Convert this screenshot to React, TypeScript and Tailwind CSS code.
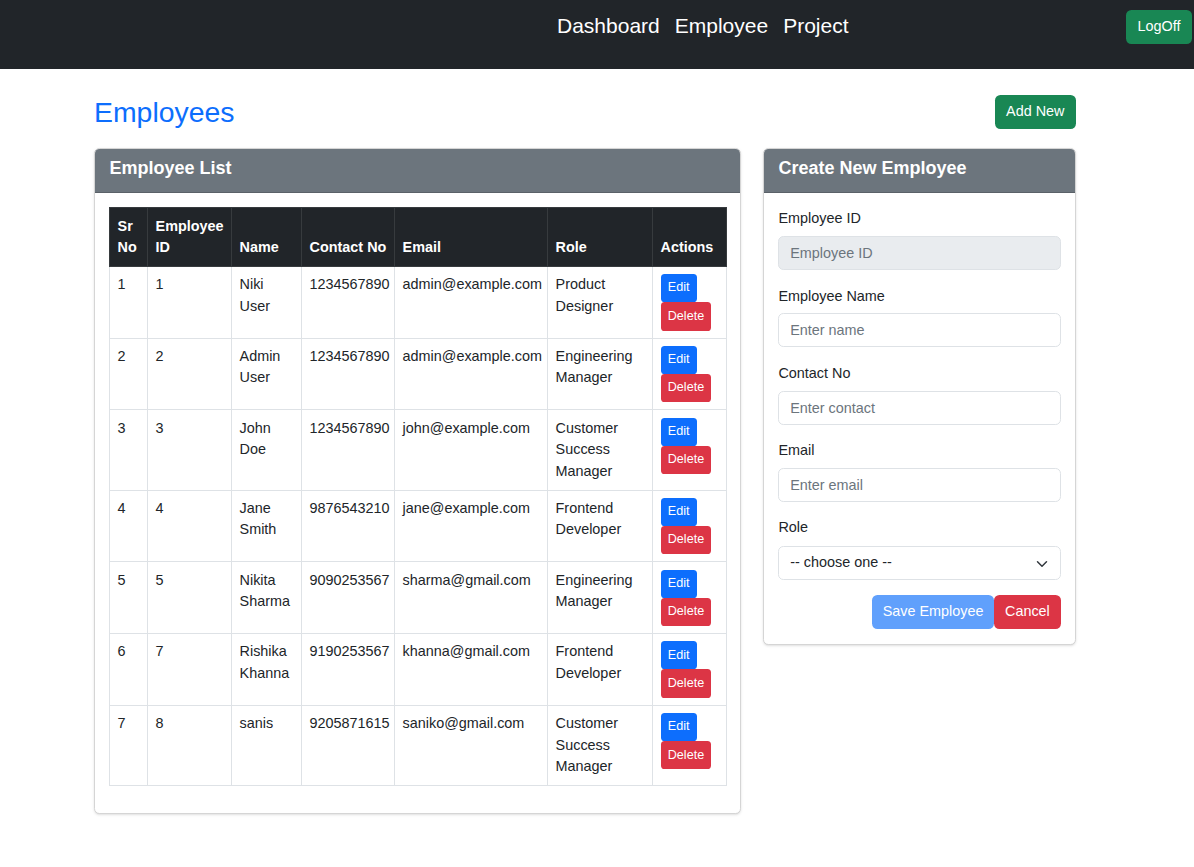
import React from 'react';

type Employee = { sr: number; id: number; name: string; contact: string; email: string; role: string };

const employees: Employee[] = [
  { sr: 1, id: 1, name: 'Niki User', contact: '1234567890', email: 'admin@example.com', role: 'Product Designer' },
  { sr: 2, id: 2, name: 'Admin User', contact: '1234567890', email: 'admin@example.com', role: 'Engineering Manager' },
  { sr: 3, id: 3, name: 'John Doe', contact: '1234567890', email: 'john@example.com', role: 'Customer Success Manager' },
  { sr: 4, id: 4, name: 'Jane Smith', contact: '9876543210', email: 'jane@example.com', role: 'Frontend Developer' },
  { sr: 5, id: 5, name: 'Nikita Sharma', contact: '9090253567', email: 'sharma@gmail.com', role: 'Engineering Manager' },
  { sr: 6, id: 7, name: 'Rishika Khanna', contact: '9190253567', email: 'khanna@gmail.com', role: 'Frontend Developer' },
  { sr: 7, id: 8, name: 'sanis', contact: '9205871615', email: 'saniko@gmail.com', role: 'Customer Success Manager' },
];

const colWidths = ['w-[38px]', 'w-[84px]', 'w-[70px]', 'w-[93px]', 'w-[153px]', 'w-[105px]', 'w-[74px]'];
const headers = [['Sr', 'No'], ['Employee', 'ID'], ['Name'], ['Contact No'], ['Email'], ['Role'], ['Actions']];

const Navbar: React.FC = () => (
  <nav className="h-[69px] bg-[#212529] flex items-start pt-[10px]">
    <div className="ml-[557px] flex gap-[15px] text-[21px] leading-[32px] text-white">
      <a className="cursor-pointer">Dashboard</a>
      <a className="cursor-pointer">Employee</a>
      <a className="cursor-pointer">Project</a>
    </div>
    <button className="ml-auto mr-[2px] h-[34px] px-[11.5px] rounded-[5.4px] bg-[#198754] text-white text-[14.4px]">
      LogOff
    </button>
  </nav>
);

const EmployeeTable: React.FC = () => (
  <div className="w-[647px] rounded-[5.4px] border border-[#d5d5d5] shadow-sm bg-white overflow-hidden">
    <div className="h-[44px] bg-[#6c757d] border-b border-[#5a6168] px-[14.4px] pb-[5px] flex items-center">
      <h5 className="text-white text-[18px] font-semibold">Employee List</h5>
    </div>
    <div className="px-[14.4px] pt-[14.4px] pb-[27px]">
      <table className="table-fixed border-collapse w-[617px] text-[14.4px] leading-[21.6px] text-[#212529]">
        <colgroup>
          {colWidths.map((w, i) => (
            <col key={i} className={w} />
          ))}
        </colgroup>
        <thead>
          <tr className="bg-[#212529] text-white">
            {headers.map((h, i) => (
              <th key={i} className="border border-[#373b3e] px-[7.2px] py-[7.2px] align-bottom text-left font-bold">
                {h.map((line, j) => (
                  <div key={j}>{line}</div>
                ))}
              </th>
            ))}
          </tr>
        </thead>
        <tbody>
          {employees.map((e) => (
            <tr key={e.sr}>
              <td className="border border-[#dee2e6] px-[7.2px] py-[7.2px] align-top">{e.sr}</td>
              <td className="border border-[#dee2e6] px-[7.2px] py-[7.2px] align-top">{e.id}</td>
              <td className="border border-[#dee2e6] px-[7.2px] py-[7.2px] align-top">{e.name}</td>
              <td className="border border-[#dee2e6] px-[7.2px] py-[7.2px] align-top whitespace-nowrap">{e.contact}</td>
              <td className="border border-[#dee2e6] px-[7.2px] py-[7.2px] align-top whitespace-nowrap">{e.email}</td>
              <td className="border border-[#dee2e6] px-[7.2px] py-[7.2px] align-top">{e.role}</td>
              <td className="border border-[#dee2e6] px-[7.2px] py-[7.2px] align-top">
                <div className="flex flex-col items-start">
                  <button className="h-[28.2px] px-[7.2px] rounded-[3.6px] bg-[#0d6efd] text-white text-[12.6px]">Edit</button>
                  <button className="h-[28.2px] px-[7.2px] rounded-[3.6px] bg-[#dc3545] text-white text-[12.6px]">Delete</button>
                </div>
              </td>
            </tr>
          ))}
        </tbody>
      </table>
    </div>
  </div>
);

const Field: React.FC<{ label: string; placeholder: string; disabled?: boolean }> = ({ label, placeholder, disabled }) => (
  <div className="mb-[14.4px]">
    <label className="block mb-[6.2px] pt-[1px] text-[14.4px] leading-[21.6px] text-[#212529]">{label}</label>
    <input
      disabled={disabled}
      placeholder={placeholder}
      className={
        'block w-full h-[34px] px-[10.8px] rounded-[5.4px] border border-[#dee2e6] text-[14.4px] placeholder:text-[#6c757d] outline-none ' +
        (disabled ? 'bg-[#e9ecef]' : 'bg-white')
      }
    />
  </div>
);

const CreateForm: React.FC = () => (
  <div className="w-[313px] self-start rounded-[5.4px] border border-[#d5d5d5] shadow-sm bg-white overflow-hidden">
    <div className="h-[44px] bg-[#6c757d] border-b border-[#5a6168] px-[14.4px] pb-[5px] flex items-center">
      <h5 className="text-white text-[18px] font-semibold">Create New Employee</h5>
    </div>
    <div className="p-[14.4px] pb-[15px]">
      <Field label="Employee ID" placeholder="Employee ID" disabled />
      <Field label="Employee Name" placeholder="Enter name" />
      <Field label="Contact No" placeholder="Enter contact" />
      <Field label="Email" placeholder="Enter email" />
      <div className="mb-[15px]">
        <label className="block mb-[7.2px] pt-[1px] text-[14.4px] leading-[21.6px] text-[#212529]">Role</label>
        <div className="relative">
          <select className="block w-full h-[34px] pl-[10.8px] pr-[32px] appearance-none rounded-[5.4px] border border-[#dee2e6] bg-white text-[14.4px] text-[#212529] outline-none">
            <option>-- choose one --</option>
          </select>
          <svg
            className="pointer-events-none absolute right-[13px] top-[12px] w-[12px] h-[12px]"
            viewBox="0 0 16 16"
            fill="none"
            stroke="#343a40"
            strokeWidth="2"
            strokeLinecap="round"
            strokeLinejoin="round"
          >
            <path d="m2 5 6 6 6-6" />
          </svg>
        </div>
      </div>
      <div className="flex justify-end">
        <button className="h-[34px] px-[10.8px] rounded-[5.4px] bg-[#60a0fc] text-white text-[14.4px]">Save Employee</button>
        <button className="h-[34px] px-[10.8px] rounded-[5.4px] bg-[#dc3545] text-white text-[14.4px]">Cancel</button>
      </div>
    </div>
  </div>
);

export default function App() {
  return (
    <div className="min-h-[867px] bg-white font-['Liberation_Sans',Arial,sans-serif]">
      <Navbar />
      <main className="ml-[94px] w-[982px] pt-[26px]">
        <div className="flex items-center justify-between h-[34px] mb-[19px]">
          <h2 className="text-[#0d6efd] text-[28.4px] leading-[34px]">Employees</h2>
          <button className="h-[34px] px-[11.5px] rounded-[5.4px] bg-[#198754] text-white text-[14.4px]">Add New</button>
        </div>
        <div className="flex gap-[22px] items-start">
          <EmployeeTable />
          <CreateForm />
        </div>
      </main>
    </div>
  );
}
